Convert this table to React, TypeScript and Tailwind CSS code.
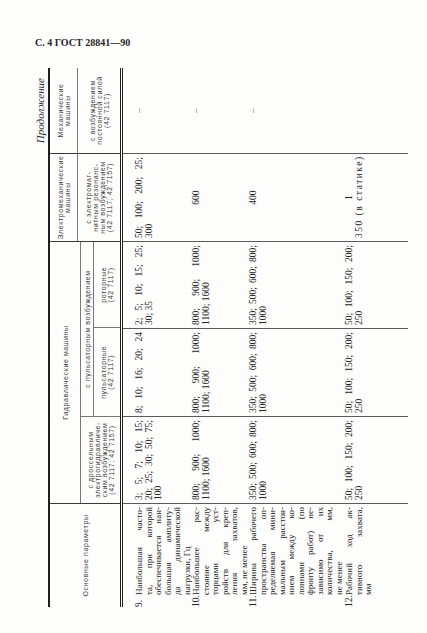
import clsx from "clsx";

// landscape table, turned -90deg onto the portrait page
const COLS = [103, 87, 88, 87, 88, 86];
const ROW_H = [57, 57, 96, 29];

type Cell = {
  lines: string[];
  all?: boolean; // justify the last line too
  center?: boolean;
  dash?: boolean;
  stat?: boolean;
};

type Row = { num: string; label: string[]; cells: Cell[] };

const range = (a: string, b: string): Cell => ({ lines: [a, b] });
const dash: Cell = { lines: ["–"], dash: true };

const rows: Row[] = [
  {
    num: "9.",
    label: [
      "Наибольшая часто-",
      "та, при которой",
      "обеспечивается наи-",
      "большая амплиту-",
      "да динамической",
      "нагрузки, Гц",
    ],
    cells: [
      { lines: ["3; 5; 7; 10; 15;", "20; 25; 30; 50; 75;", "100"] },
      { lines: ["8; 10; 16; 20; 24"], all: true },
      { lines: ["2; 5; 10; 15; 25;", "30; 35"] },
      { lines: ["50; 100; 200; 25;", "300"] },
      dash,
    ],
  },
  {
    num: "10.",
    label: [
      "Наибольшее рас-",
      "стояние между",
      "торцами уст-",
      "ройств для креп-",
      "ления захватов,",
      "мм, не менее",
    ],
    cells: [
      range("800; 900; 1000;", "1100; 1600"),
      range("800; 900; 1000;", "1100; 1600"),
      range("800; 900; 1000;", "1100; 1600"),
      { lines: ["600"], center: true },
      dash,
    ],
  },
  {
    num: "11.",
    label: [
      "Ширина рабочего",
      "пространства оп-",
      "ределяемая мини-",
      "мальным расстоя-",
      "нием между ко-",
      "лоннами (по",
      "фронту работ) не-",
      "зависимо от их",
      "количества, мм,",
      "не менее",
    ],
    cells: [
      range("350; 500; 600; 800;", "1000"),
      range("350; 500; 600; 800;", "1000"),
      range("350; 500; 600; 800;", "1000"),
      { lines: ["400"], center: true },
      dash,
    ],
  },
  {
    num: "12.",
    label: ["Рабочий ход ак-", "тивного захвата,", "мм"],
    cells: [
      range("50; 100; 150; 200;", "250"),
      range("50; 100; 150; 200;", "250"),
      range("50; 100; 150; 200;", "250"),
      { lines: ["1", "350 (в статике)"], stat: true },
      { lines: [] },
    ],
  },
];

function Lines({ lines, all }: { lines: string[]; all?: boolean }) {
  return (
    <>
      {lines.map((t, i) => (
        <div
          key={i}
          className={clsx("whitespace-nowrap", (all || i < lines.length - 1) && "[text-align-last:justify]")}
        >
          {t}
        </div>
      ))}
    </>
  );
}

function DataCell({ cell }: { cell: Cell }) {
  if (cell.stat) {
    return (
      <div className="px-[3px]">
        <div className="text-center">{cell.lines[0]}</div>
        <div className="whitespace-nowrap tracking-[1.5px]">{cell.lines[1]}</div>
      </div>
    );
  }
  if (cell.dash) {
    return <div className="text-center text-[#777]">{cell.lines[0]}</div>;
  }
  if (cell.center) {
    return <div className="text-center">{cell.lines[0]}</div>;
  }
  return (
    <div className="px-[3px]">
      <Lines lines={cell.lines} all={cell.all} />
    </div>
  );
}

function Head({ children, className }: { children: React.ReactNode; className?: string }) {
  return (
    <div className={clsx("flex items-center justify-center text-center", className)}>
      <div>{children}</div>
    </div>
  );
}

export default function App() {
  return (
    <div className="h-[633px] w-[427px] overflow-hidden bg-[#fdfdfc] font-['Liberation_Serif',serif] text-[#262626]">
      <div className="pl-[35px] pt-[37px] text-[10px] font-bold leading-[12px]">С. 4 ГОСТ 28841—90</div>

      <div className="ml-[33px] mt-[19px] h-[539px] w-[375px]">
        <div className="h-[375px] w-[539px] origin-top-left [transform:translateY(539px)_rotate(-90deg)]">
          <div className="h-[15px] pr-[10px] text-right text-[11px] italic leading-[15px]">Продолжение</div>

          <div className="border-t-2 border-[#1e1e1e]">
            {/* header */}
            <div className="flex h-[70px] font-['Liberation_Sans',sans-serif] text-[7px] leading-[7px] tracking-[0.6px] text-[#3a3a3a]">
              <Head className="w-[103px]">Основные параметры</Head>
              <div className="flex w-[262px] flex-col border-l border-[#3a3a3a]">
                <Head className="h-[31px] border-b border-[#777]">Гидравлические машины</Head>
                <div className="flex flex-1">
                  <Head className="w-[87px]">
                    с дроссельным
                    <br />
                    электрогидравличе-
                    <br />
                    ским возбуждением
                    <br />
                    (42 7117; 42 7157)
                  </Head>
                  <div className="flex w-[175px] flex-col border-l border-[#777]">
                    <Head className="h-[13px] border-b border-[#777]">с пульсаторным возбуждением</Head>
                    <div className="flex flex-1">
                      <Head className="w-[88px]">
                        пульсаторные
                        <br />
                        (42 7117)
                      </Head>
                      <Head className="w-[87px] border-l border-[#777]">
                        роторные
                        <br />
                        (42 7117)
                      </Head>
                    </div>
                  </div>
                </div>
              </div>
              <div className="flex w-[88px] flex-col border-l border-[#3a3a3a]">
                <Head className="h-[28px] border-b border-[#777]">
                  Электромеханические
                  <br />
                  машины
                </Head>
                <Head className="flex-1">
                  с электромаг-
                  <br />
                  нитным резонанс-
                  <br />
                  ным возбуждением
                  <br />
                  (42 7117; 42 7157)
                </Head>
              </div>
              <div className="flex w-[86px] flex-col border-l border-[#3a3a3a]">
                <Head className="h-[28px] border-b border-[#777]">
                  Механические
                  <br />
                  машины
                </Head>
                <Head className="flex-1">
                  с возбуждением
                  <br />
                  постоянной силой
                  <br />
                  (42 7117)
                </Head>
              </div>
            </div>
            <div className="h-[3px] border-y border-[#1e1e1e]" />

            {/* data */}
            <div className="flex h-[285px] text-[9.5px] leading-[9.5px]">
              <div className="w-[103px] pt-[12px] text-[9px]">
                {rows.map((r, i) => (
                  <div key={r.num} className="flex pr-[3px]" style={{ height: ROW_H[i] }}>
                    <span className="w-[12px] shrink-0 text-[9.5px]">{r.num}</span>
                    <div className="min-w-0 flex-1">
                      <Lines lines={r.label} />
                    </div>
                  </div>
                ))}
              </div>
              {COLS.slice(1).map((w, c) => (
                <div key={c} className="border-l border-[#5a5a5a] pt-[12px]" style={{ width: w }}>
                  {rows.map((r, i) => (
                    <div key={r.num} style={{ height: ROW_H[i] }}>
                      <DataCell cell={r.cells[c]} />
                    </div>
                  ))}
                </div>
              ))}
            </div>
          </div>
        </div>
      </div>
    </div>
  );
}
